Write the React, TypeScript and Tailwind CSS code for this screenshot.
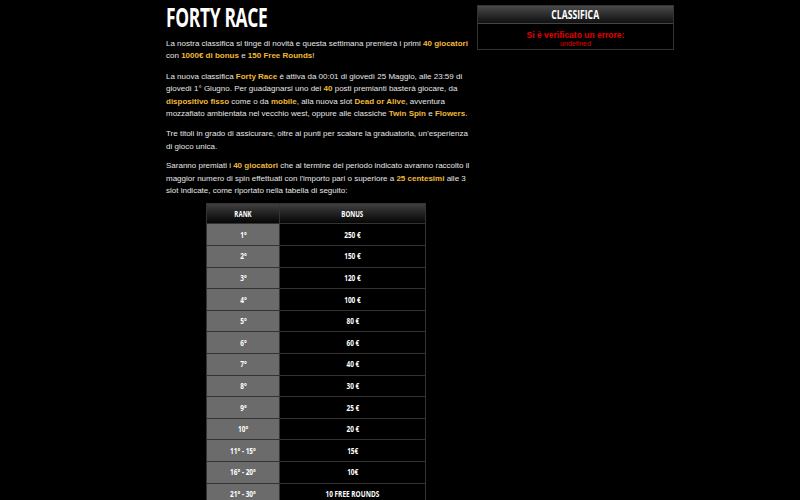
import React from 'react';

const rows: [string, string][] = [
  ['1°', '250 €'],
  ['2°', '150 €'],
  ['3°', '120 €'],
  ['4°', '100 €'],
  ['5°', '80 €'],
  ['6°', '60 €'],
  ['7°', '40 €'],
  ['8°', '30 €'],
  ['9°', '25 €'],
  ['10°', '20 €'],
  ['11° - 15°', '15€'],
  ['16° - 20°', '10€'],
  ['21° - 30°', '10 FREE ROUNDS'],
];

const cond = { fontFamily: '"Open Sans", "DejaVu Sans", sans-serif' };

function Hl({ children }: { children: React.ReactNode }) {
  return <b className="font-bold text-[#f2b935]">{children}</b>;
}

function Cond({ children, className = '' }: { children: React.ReactNode; className?: string }) {
  // testo condensato: Open Sans bold schiacciato in orizzontale
  return (
    <span className={`inline-block scale-x-[0.72] font-bold whitespace-nowrap ${className}`} style={cond}>
      {children}
    </span>
  );
}

export default function App() {
  return (
    <div className="h-screen bg-black text-[#e6e6e6] overflow-hidden">
      <div className="flex items-start pl-[166px] gap-[5px]">
        {/* Colonna articolo */}
        <main className="w-[306px] shrink-0 text-[8px] leading-[12.4px]" style={{ fontFamily: '"Liberation Sans", Arial, sans-serif' }}>
          <h1 className="h-[38px] pt-[2px] text-[26px] leading-[30px] text-white font-bold tracking-[-0.5px] origin-left scale-x-[0.67] whitespace-nowrap" style={cond}>
            FORTY RACE
          </h1>
          <p className="mb-[8px]">
            La nostra classifica si tinge di novità e questa settimana premierà i primi <Hl>40 giocatori</Hl> con{' '}
            <Hl>1000€ di bonus</Hl> e <Hl>150 Free Rounds</Hl>!
          </p>
          <p className="mb-[8px]">
            La nuova classifica <Hl>Forty Race</Hl> è attiva da 00:01 di giovedì 25 Maggio, alle 23:59 di giovedì 1° Giugno. Per guadagnarsi uno dei{' '}
            <Hl>40</Hl> posti premianti basterà giocare, da <Hl>dispositivo fisso</Hl> come o da <Hl>mobile</Hl>, alla nuova slot{' '}
            <Hl>Dead or Alive</Hl>, avventura mozzafiato ambientata nel vecchio west, oppure alle classiche <Hl>Twin Spin</Hl> e{' '}
            <Hl>Flowers</Hl>.
          </p>
          <p className="mb-[7px]">
            Tre titoli in grado di assicurare, oltre ai punti per scalare la graduatoria, un'esperienza di gioco unica.
          </p>
          <p className="mb-[6px]">
            Saranno premiati i <Hl>40 giocatori</Hl> che al termine del periodo indicato avranno raccolto il maggior numero di spin effettuati con
            l'importo pari o superiore a <Hl>25 centesimi</Hl> alle 3 slot indicate, come riportato nella tabella di seguito:
          </p>

          {/* Tabella premi */}
          <table className="ml-[40px] w-[220px] border-collapse text-white text-[9px] leading-[11px]">
            <thead>
              <tr className="h-[20px] bg-gradient-to-b from-[#404040] to-[#050505] text-[8.5px]">
                <th className="w-[73px] border border-[#333] p-0 text-center">
                  <Cond>RANK</Cond>
                </th>
                <th className="border border-[#333] p-0 text-center">
                  <Cond>BONUS</Cond>
                </th>
              </tr>
            </thead>
            <tbody>
              {rows.map(([rank, bonus]) => (
                <tr key={rank} className="h-[21.6px]">
                  <td className="bg-[#6b6b6b] border border-[#333] p-0 text-center">
                    <Cond>{rank}</Cond>
                  </td>
                  <td className="bg-black border border-[#333] p-0 text-center">
                    <Cond>{bonus}</Cond>
                  </td>
                </tr>
              ))}
            </tbody>
          </table>
        </main>

        {/* Sidebar classifica */}
        <aside className="w-[197px] mt-[5px] border border-[#333]">
          <div className="h-[18px] flex items-center justify-center bg-gradient-to-b from-[#4a4a4a] to-[#111] border-b border-[#444] text-white text-[12px]">
            <Cond>CLASSIFICA</Cond>
          </div>
          <div className="h-[25px] flex flex-col items-center justify-end pb-[1px] text-[#e00000]" style={{ fontFamily: '"Liberation Sans", Arial, sans-serif' }}>
            <span className="text-[8.5px] leading-[9px] font-bold">Si è verificato un errore:</span>
            <span className="text-[7px] leading-[8px]">undefined</span>
          </div>
        </aside>
      </div>
    </div>
  );
}
